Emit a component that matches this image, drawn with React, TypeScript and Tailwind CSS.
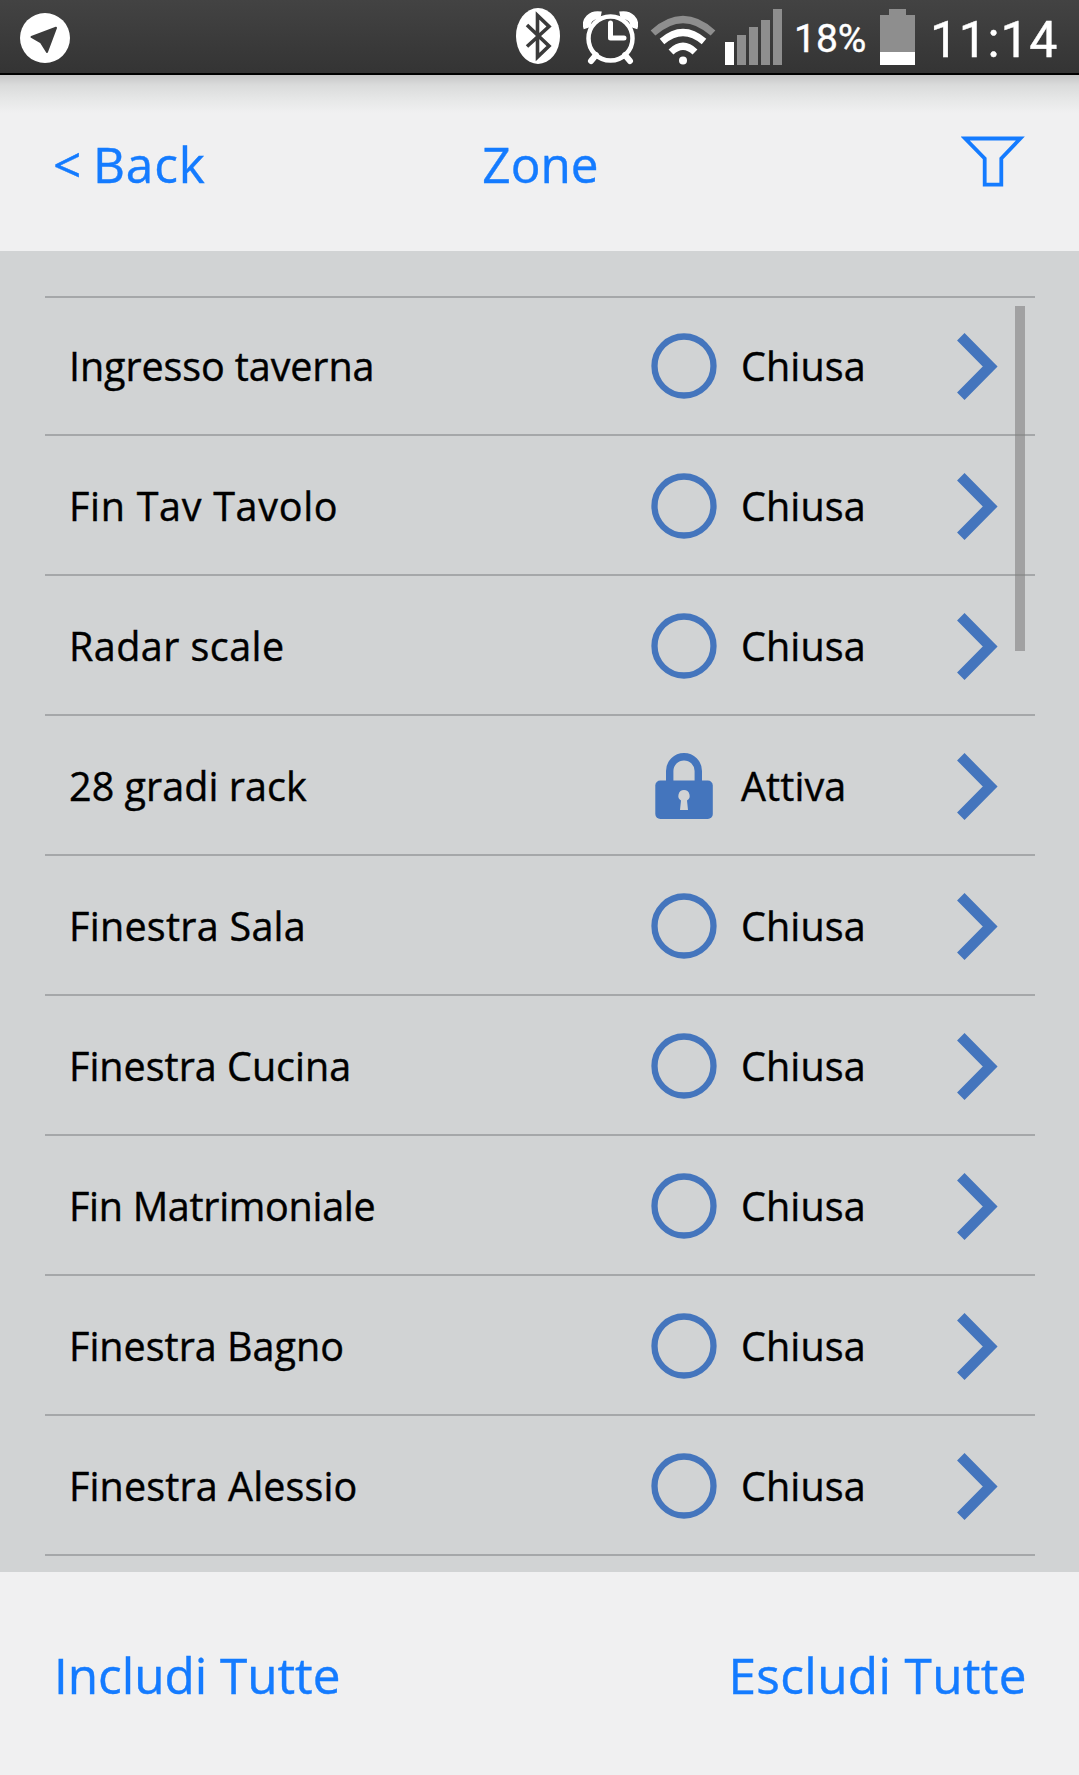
import clsx from 'clsx';

interface Zone {
  name: string;
  active?: boolean;
  tracking: string;
}

const zones: Zone[] = [
  { name: 'Ingresso taverna', tracking: 'tracking-[-0.1px]' },
  { name: 'Fin Tav Tavolo', tracking: 'tracking-[0.7px]' },
  { name: 'Radar scale', tracking: 'tracking-[0.45px]' },
  { name: '28 gradi rack', active: true, tracking: 'tracking-[0.05px]' },
  { name: 'Finestra Sala', tracking: 'tracking-[0.27px]' },
  { name: 'Finestra Cucina', tracking: 'tracking-[0px]' },
  { name: 'Fin Matrimoniale', tracking: 'tracking-[-0.3px]' },
  { name: 'Finestra Bagno', tracking: 'tracking-[0px]' },
  { name: 'Finestra Alessio', tracking: 'tracking-[0.12px]' },
];

function StatusBar() {
  return (
    <div className="flex h-[75px] shrink-0 items-start border-b-2 border-black bg-gradient-to-b from-[#434343] to-[#343434] font-['Roboto',sans-serif] text-white">
      <svg className="ml-5 h-[73px] w-[50px]" viewBox="0 0 50 73">
        <circle cx="25" cy="38" r="25" fill="#fff" />
        <path d="M36 27.800 27 52 21 42.500 11.500 37Z" fill="#3b3b3b" stroke="#3b3b3b" strokeWidth="2" strokeLinejoin="round" />
      </svg>

      {/* bluetooth */}
      <svg className="ml-[446px] h-[73px] w-11" viewBox="0 0 44 73">
        <ellipse cx="22" cy="36" rx="22" ry="28" fill="#fff" />
        <path d="m11 25 22 21-11.500 11V15.500L33 26.500 11 46.500" fill="none" stroke="#3b3b3b" strokeWidth="3.600" />
      </svg>

      {/* alarm */}
      <svg className="ml-[23px] h-[73px] w-[55px]" viewBox="0 0 55 73" fill="none" stroke="#fff">
        <path d="M4.500 28C2 21 8 13.500 18 15.500M50.500 28C53 21 47 13.500 37 15.500" strokeWidth="8" />
        <circle cx="27.500" cy="38.500" r="22" strokeWidth="4.500" />
        <path d="m13 55-5 6M42 55l5 6" strokeWidth="6" strokeLinecap="round" />
        <path d="M27.500 23v15H41" strokeWidth="5" strokeLinecap="round" strokeLinejoin="round" />
      </svg>

      {/* wifi */}
      <svg className="ml-[12px] h-[73px] w-[66px]" viewBox="0 0 66 73" fill="none" stroke="#fff" strokeWidth="7">
        <path d="M3 33Q33 6 63 33" stroke="#8e8e8e" />
        <path d="M12 41.500Q33 23.500 54 41.500M21 52Q33 40.500 45 52" />
        <circle cx="33" cy="60.500" r="4" fill="#fff" stroke="none" />
      </svg>

      <svg className="ml-[9px] h-[73px] w-[57px]" viewBox="0 0 57 73" fill="#8e8e8e">
        <path d="M0 42h9v23H0z" fill="#fff" />
        <path d="M12 35h9v30h-9zM24 27h9v38h-9zM36 20h9v45h-9zM48 9h9v56h-9z" />
      </svg>

      <span className="ml-[12px] mt-4 w-[86px] whitespace-nowrap text-[39px] leading-[46px] [-webkit-text-stroke:0.4px]">18%</span>

      <svg className="h-[73px] w-[35px]" viewBox="0 0 35 73">
        <path d="M9 9h17v6h9v37H0V15h9z" fill="#8e8e8e" />
        <path d="M0 52h35v13H0z" fill="#fff" />
      </svg>

      <span className="ml-[15px] mt-[11px] whitespace-nowrap text-[50px] leading-[59px] tracking-[0.7px] [-webkit-text-stroke:0.4px]">11:14</span>
    </div>
  );
}

function FunnelIcon() {
  return (
    <svg className="h-[51px] w-16" viewBox="0 0 64 51" fill="none" stroke="#147bff" strokeWidth="3.800">
      <path d="M4.200 2.500h55.200L40.300 22.500V48.700H23.700V22.500Z" />
    </svg>
  );
}

function CircleIcon() {
  return (
    <svg className="h-[66px] w-[66px]" viewBox="0 0 66 66" fill="none">
      <circle cx="33" cy="33" r="29.500" stroke="#4475bd" strokeWidth="6.300" />
    </svg>
  );
}

function LockIcon() {
  return (
    <svg className="h-[66px] w-[66px]" viewBox="0 0 66 66">
      <path d="M18.700 30V18a14.300 14.300 0 0 1 28.600 0v12" fill="none" stroke="#4475bd" strokeWidth="7.400" />
      <rect x="4.300" y="27.500" width="57.500" height="38.500" rx="5" fill="#4475bd" />
      <path d="M33 37a5.700 5.700 0 0 0-3 10.500L29 57h8l-1-9.500A5.700 5.700 0 0 0 33 37Z" fill="#d1d3d4" />
    </svg>
  );
}

function ChevronIcon() {
  return (
    <svg className="h-[67px] w-[41px]" viewBox="0 0 41 67" fill="none">
      <path d="M3.800 3.800 33.200 33.500 3.800 63.200" stroke="#4475bd" strokeWidth="10.500" />
    </svg>
  );
}

function ZoneRow({ zone, first }: { zone: Zone; first: boolean }) {
  return (
    <li
      className={clsx(
        'flex items-center border-b-2 border-[#a5a7a9] pl-6 text-[39.5px] leading-none text-black [-webkit-text-stroke:0.4px]',
        first ? 'h-[138px]' : 'h-[140px] pt-0.5',
      )}
    >
      <span className={clsx('w-[582px] whitespace-nowrap pt-0.5', zone.tracking)}>{zone.name}</span>
      {zone.active ? <LockIcon /> : <CircleIcon />}
      <span className="ml-6 w-[216px] whitespace-nowrap pt-0.5 tracking-[0.1px]">{zone.active ? 'Attiva' : 'Chiusa'}</span>
      <ChevronIcon />
    </li>
  );
}

export default function App() {
  return (
    <div className="flex h-[1775px] w-[1079px] flex-col overflow-hidden bg-[#f0f0f1] font-['Open_Sans',sans-serif] [font-kerning:none]">
      <StatusBar />

      <header className="h-44 shrink-0 bg-[linear-gradient(to_bottom,#c6c6c7_0px,#dadbdb_10px,#e6e7e7_24px,#f0f0f1_38px)] text-[49.5px] leading-none text-[#147bff] [-webkit-text-stroke:0.4px]">
        <div className="grid h-full grid-cols-3 items-center pl-[53px] pr-[54px]">
          <button className="justify-self-start whitespace-nowrap pt-1 tracking-[0.9px] [word-spacing:-3px]">&lt; Back</button>
          <h1 className="justify-self-center pl-[3px] pt-1">Zone</h1>
          <button className="justify-self-end pb-[3px]" aria-label="Filter">
            <FunnelIcon />
          </button>
        </div>
      </header>

      <main className="relative h-[1321px] shrink-0 bg-[#d1d3d4] pl-[45px] pr-11 pt-[45px]">
        <ul className="border-t-2 border-[#a5a7a9]">
          {zones.map((zone, i) => (
            <ZoneRow key={zone.name} zone={zone} first={i === 0} />
          ))}
        </ul>
        {/* scroll thumb */}
        <div className="absolute right-[54px] top-[55px] h-[345px] w-2.5 bg-[#808080]/60" />
      </main>

      <footer className="flex flex-1 items-center justify-between pl-[54px] pr-[52px] pt-1 text-[49.5px] leading-none text-[#147bff] [-webkit-text-stroke:0.4px]">
        <button className="whitespace-nowrap tracking-[-0.05px]">Includi Tutte</button>
        <button className="whitespace-nowrap tracking-[0.35px]">Escludi Tutte</button>
      </footer>
    </div>
  );
}
